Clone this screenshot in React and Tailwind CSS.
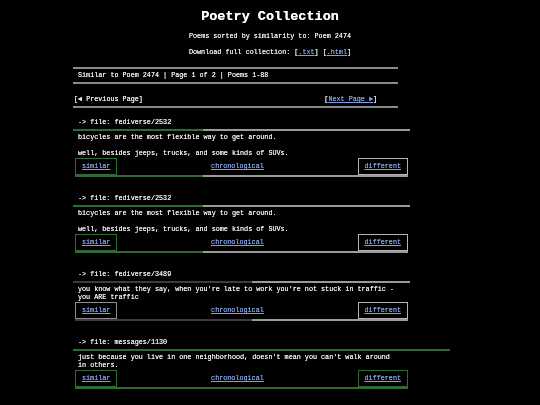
import React from 'react';

const poems = [
    {
        file: 'fediverse/2532',
        lines: ['bicycles are the most flexible way to get around.', 'well, besides jeeps, trucks, and some kinds of SUVs.'],
        barWidth: 337,
        fill: 130,
        tone: 'green',
    },
    {
        file: 'fediverse/2532',
        lines: ['bicycles are the most flexible way to get around.', 'well, besides jeeps, trucks, and some kinds of SUVs.'],
        barWidth: 337,
        fill: 130,
        tone: 'green',
    },
    {
        file: 'fediverse/3489',
        lines: ["you know what they say, when you're late to work you're not stuck in traffic - you ARE traffic"],
        barWidth: 337,
        fill: 179,
        tone: 'dark',
    },
    {
        file: 'messages/1130',
        lines: ["just because you live in one neighborhood, doesn't mean you can't walk around in others."],
        barWidth: 377,
        fill: 377,
        tone: 'full',
    },
];

function Bar({ width, fill, tone, offset = 0 }) {
    const fillColor = tone === 'dark' ? 'bg-[#3c3c3c]' : 'bg-[#2f6a31]';
    return (
        <div className="flex h-[2px]" style={{ width }}>
            <div className={`h-[2px] shrink-0 ${fillColor}`} style={{ width: Math.max(0, Math.min(fill - offset, width)) }} />
            <div className="h-[2px] flex-1 bg-[#9a9a9a]" />
        </div>
    );
}

function Poem({ poem }) {
    const simBorder = poem.tone === 'green' || poem.tone === 'full' ? 'border-[#2f6a31]' : 'border-[#8c8c8c]';
    const diffBorder = poem.tone === 'full' ? 'border-[#2f6a31]' : 'border-[#b4b4b4]';
    return (
        <div className="mt-[10px] mb-[17px]">
            <div className="pl-[5px] leading-[8px]">-&gt; file: {poem.file}</div>
            <div className="mt-[3px]">
                <Bar width={poem.barWidth} fill={poem.fill} tone={poem.tone} />
            </div>
            <div className="w-[325px] pl-[5px] pt-[2px] pb-[1px]">
                {poem.lines.map((line, i) => (
                    <p key={i} className={`leading-[8px] ${i > 0 ? 'mt-[8px]' : ''}`}>{line}</p>
                ))}
            </div>
            <div className="ml-[2px] w-[333px]">
                <div className="flex h-[17px] items-stretch">
                    <a href="#" className={`flex items-center border px-[6px] text-[#7f9fe4] underline ${simBorder}`}>similar</a>
                    <div className="flex flex-1 items-center justify-center">
                        <a href="#" className="text-[#7f9fe4] underline">chronological</a>
                    </div>
                    <a href="#" className={`flex items-center border px-[6px] text-[#7f9fe4] underline ${diffBorder}`}>different</a>
                </div>
                <Bar width={333} fill={poem.fill} tone={poem.tone} offset={2} />
            </div>
        </div>
    );
}

export default function App() {
    return (
        <div className="min-h-[405px] w-[540px] bg-black text-[6.75px] text-[#ececec] will-change-transform [text-shadow:0_0_0.4px_currentColor]" style={{ fontFamily: '"Liberation Mono", monospace' }}>
            <div className="pt-[9px] text-center">
                <h1 className="text-[13.5px] font-bold leading-[16px] text-white">Poetry Collection</h1>
                <p className="mt-[7px] leading-[8px]">Poems sorted by similarity to: Poem 2474</p>
                <p className="mt-[8px] leading-[8px]">
                    Download full collection: [<a href="#" className="text-[#7f9fe4] underline">.txt</a>] [<a href="#" className="text-[#7f9fe4] underline">.html</a>]
                </p>
            </div>
            <div className="ml-[73px]">
                <div className="mt-[11px] w-[325px] border-y-2 border-[#8a8a8a] py-[2px] pl-[5px] leading-[9px]">
                    Similar to Poem 2474 | Page 1 of 2 | Poems 1-88
                </div>
                <div className="flex w-[325px] justify-between pt-[11px] pb-[3px] pl-[1px] pr-[21px] leading-[8px]">
                    <span>[◄ Previous Page]</span>
                    <span>[<a href="#" className="text-[#7f9fe4] underline">Next Page ►</a>]</span>
                </div>
                <div className="h-[2px] w-[325px] bg-[#8a8a8a]" />
                {poems.map((poem, i) => (
                    <Poem key={i} poem={poem} />
                ))}
            </div>
        </div>
    );
}
